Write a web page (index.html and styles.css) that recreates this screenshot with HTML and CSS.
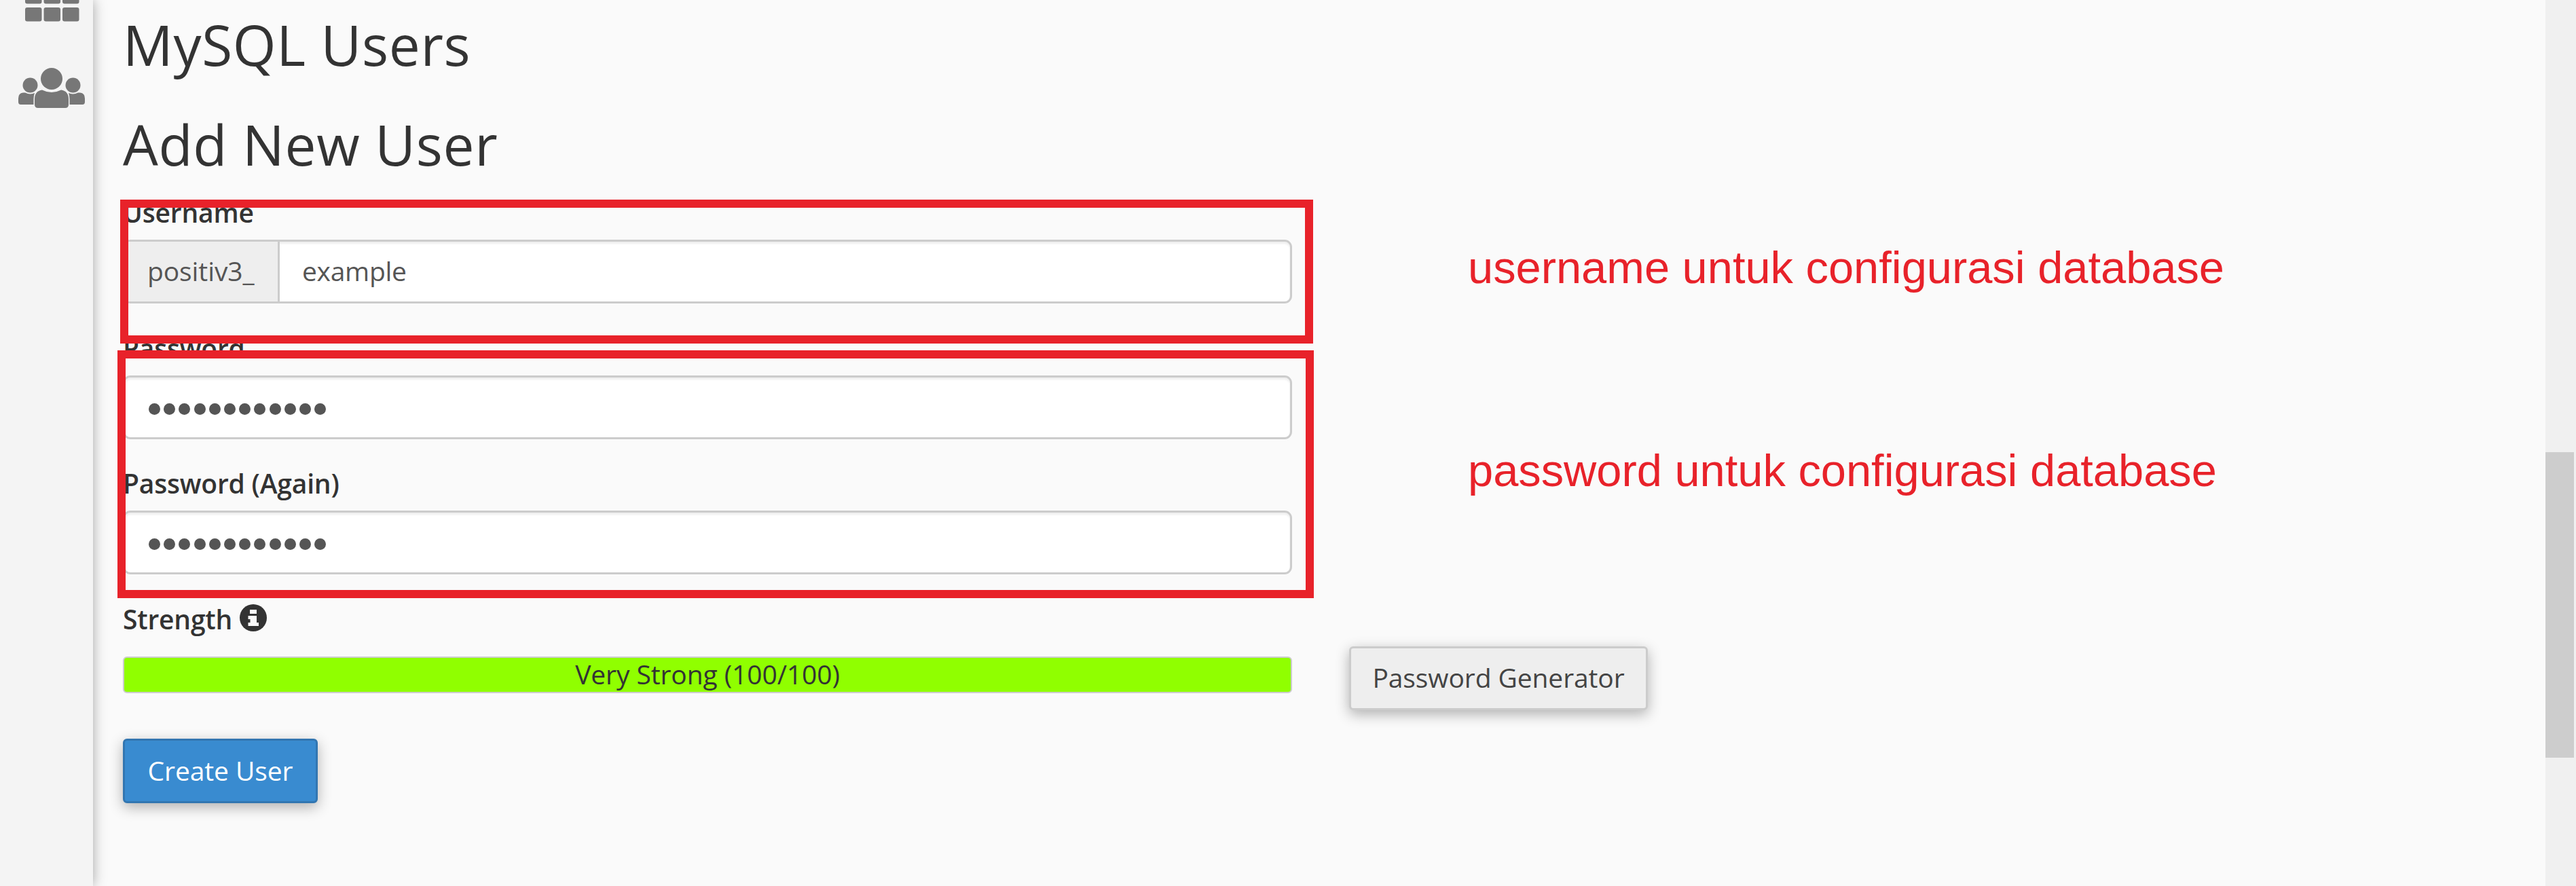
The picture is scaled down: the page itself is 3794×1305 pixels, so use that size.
FILE: index.html
```html
<!DOCTYPE html>
<html lang="en">
<head>
<meta charset="utf-8">
<title>MySQL Users</title>
<link rel="stylesheet" href="styles.css">
</head>
<body>
<div class="page">
  <nav class="sidebar">
    <svg class="icon-grid" viewBox="0 0 80 55" aria-hidden="true">
      <rect x="0" y="0" width="24.500" height="20.500" rx="3"/><rect x="27.500" y="0" width="24.500" height="20.500" rx="3"/><rect x="55" y="0" width="24.500" height="20.500" rx="3"/>
      <rect x="0" y="26" width="24.500" height="20.500" rx="3"/><rect x="27.500" y="26" width="24.500" height="20.500" rx="3"/><rect x="55" y="26" width="24.500" height="20.500" rx="3"/>
    </svg>
    <svg class="icon-users" viewBox="0 0 98 59" aria-hidden="true">
      <ellipse cx="17.500" cy="25.500" rx="11" ry="11"/>
      <ellipse cx="80.500" cy="25.500" rx="11" ry="11"/>
      <path d="M0 50V45Q0 37 7 36.500H10Q17.500 40 24 37Q22.500 41 22.500 46V54H3.500Q0 54 0 50Z"/>
      <path d="M98 50V45Q98 37 91 36.500H88Q80.500 40 74 37Q75.500 41 75.500 46V54H94.500Q98 54 98 50Z"/>
      <ellipse cx="49" cy="16" rx="16" ry="16"/>
      <path d="M24 54V46Q24 34 35 32.500Q42 36 49 36Q56 36 63 32.500Q74 34 74 46V54Q74 59 69 59H29Q24 59 24 54Z"/>
    </svg>
  </nav>
  <main class="content">
    <h1 class="heading">MySQL Users</h1>
    <h2 class="heading">Add New User</h2>
    <div class="group">
      <div class="label">Username</div>
      <div class="field"><span class="addon">positiv3_</span><span class="value">example</span></div>
    </div>
    <div class="group">
      <div class="label">Password</div>
      <div class="field"><span class="dots"><i></i><i></i><i></i><i></i><i></i><i></i><i></i><i></i><i></i><i></i><i></i><i></i></span></div>
    </div>
    <div class="group">
      <div class="label">Password (Again)</div>
      <div class="field"><span class="dots"><i></i><i></i><i></i><i></i><i></i><i></i><i></i><i></i><i></i><i></i><i></i><i></i></span></div>
    </div>
    <div class="label">Strength
      <svg class="icon-info" viewBox="0 0 40 40" aria-hidden="true"><circle cx="20" cy="20" r="20"/><path d="M15 8H25V14H15ZM12.500 17H25V27H28V32H12.500V27H15.500V22H12.500Z"/></svg>
    </div>
    <div class="strength">
      <div class="meter">Very Strong (100/100)</div>
      <button class="btn" type="button">Password Generator</button>
    </div>
    <button class="btn primary" type="button">Create User</button>
  </main>
  <div class="scrollbar"><div class="thumb"></div></div>
  <div class="mark mark-user"></div>
  <div class="mark mark-pass"></div>
  <p class="note note-user">username untuk configurasi database</p>
  <p class="note note-pass">password untuk configurasi database</p>
</div>
</body>
</html>
```

FILE: styles.css
```css
* { box-sizing: border-box; }

body {
  margin: 0;
  background: #fafafa;
  color: #333;
  font-family: "Open Sans", sans-serif;
  font-size: 39px;
  letter-spacing: -.1px;
}

.page {
  position: relative;
  display: flex;
  width: 3794px;
  height: 1305px;
  overflow: hidden;
}

.sidebar {
  flex: none;
  display: flex;
  flex-direction: column;
  width: 137px;
  background: #f4f4f4;
  box-shadow: 0 0 18px rgba(0, 0, 0, .35);
  fill: #777;
}

.icon-grid { width: 80px; height: 55px; margin: -15px 0 0 37px; }
.icon-users { width: 98px; height: 59px; margin: 60px 0 0 27px; }

.content {
  flex: 1;
  display: flex;
  flex-direction: column;
  align-items: flex-start;
  padding: 20px 0 0 44px;
}

.heading {
  margin: 0;
  font-size: 82px;
  font-weight: 400;
  letter-spacing: .65px;
  line-height: 90px;
  white-space: nowrap;
}

.heading + .heading { margin: 57px 0 28px; }

.group { margin-bottom: 37.7px; }

.label {
  display: flex;
  gap: 11px;
  height: 56px;
  margin-bottom: 12px;
  font-weight: 600;
  letter-spacing: -.2px;
  line-height: 56px;
}

.icon-info { width: 40px; height: 40px; margin-top: 6px; fill: #333; }
.icon-info path { fill: #fafafa; }

.field {
  display: flex;
  width: 1722px;
  height: 94px;
  overflow: hidden;
  border: 3px solid #ccc;
  border-radius: 11px;
  background: #fff;
  box-shadow: inset 0 3px 3px rgba(0, 0, 0, .07);
  color: #555;
  line-height: 86px;
}

.addon {
  width: 228px;
  padding-left: 33px;
  border-right: 3px solid #ccc;
  background: #eee;
}

.value { padding-left: 33px; letter-spacing: -.3px; }

.dots {
  display: flex;
  align-items: center;
  gap: 5.200px;
  padding: 5px 0 0 35px;
}

.dots i { width: 17px; height: 17px; border-radius: 50%; background: #555; }

.strength {
  display: flex;
  align-items: flex-start;
  gap: 84px;
}

.meter {
  width: 1722px;
  height: 54px;
  margin-top: 15px;
  border: 2px solid #ccc;
  border-radius: 6px;
  background: #90ff00;
  line-height: 48px;
  text-align: center;
}

.btn {
  width: 440px;
  height: 94px;
  padding: 0 0 2px;
  border: 3px solid #ccc;
  border-radius: 6px;
  background: #eee;
  box-shadow: 0 6px 20px rgba(0, 0, 0, .3);
  color: #444;
  font: inherit;
  letter-spacing: inherit;
  line-height: 86px;
  white-space: nowrap;
}

.btn.primary {
  width: 287px;
  height: 95px;
  margin-top: 42px;
  border-color: #3276b1;
  background: #398bd0;
  color: #fff;
}

.scrollbar {
  flex: none;
  width: 45px;
  padding: 666px 3px 0 0;
  background: #f0f0f0;
}

.thumb { height: 450px; background: #cdcdcd; }

/* Callouts laid over the form */
.mark {
  position: absolute;
  border: 12px solid #e8222a;
}

.mark-user { left: 177px; top: 294px; width: 1757px; height: 212px; }
.mark-pass { left: 173px; top: 516px; width: 1762px; height: 365px; }

.note {
  position: absolute;
  left: 2162px;
  margin: 0;
  color: #e8222a;
  font: 66.8px/78px "Liberation Sans", Arial, sans-serif;
  letter-spacing: 0;
  white-space: nowrap;
}

.note-user { top: 355px; }
.note-pass { top: 654px; }
```
